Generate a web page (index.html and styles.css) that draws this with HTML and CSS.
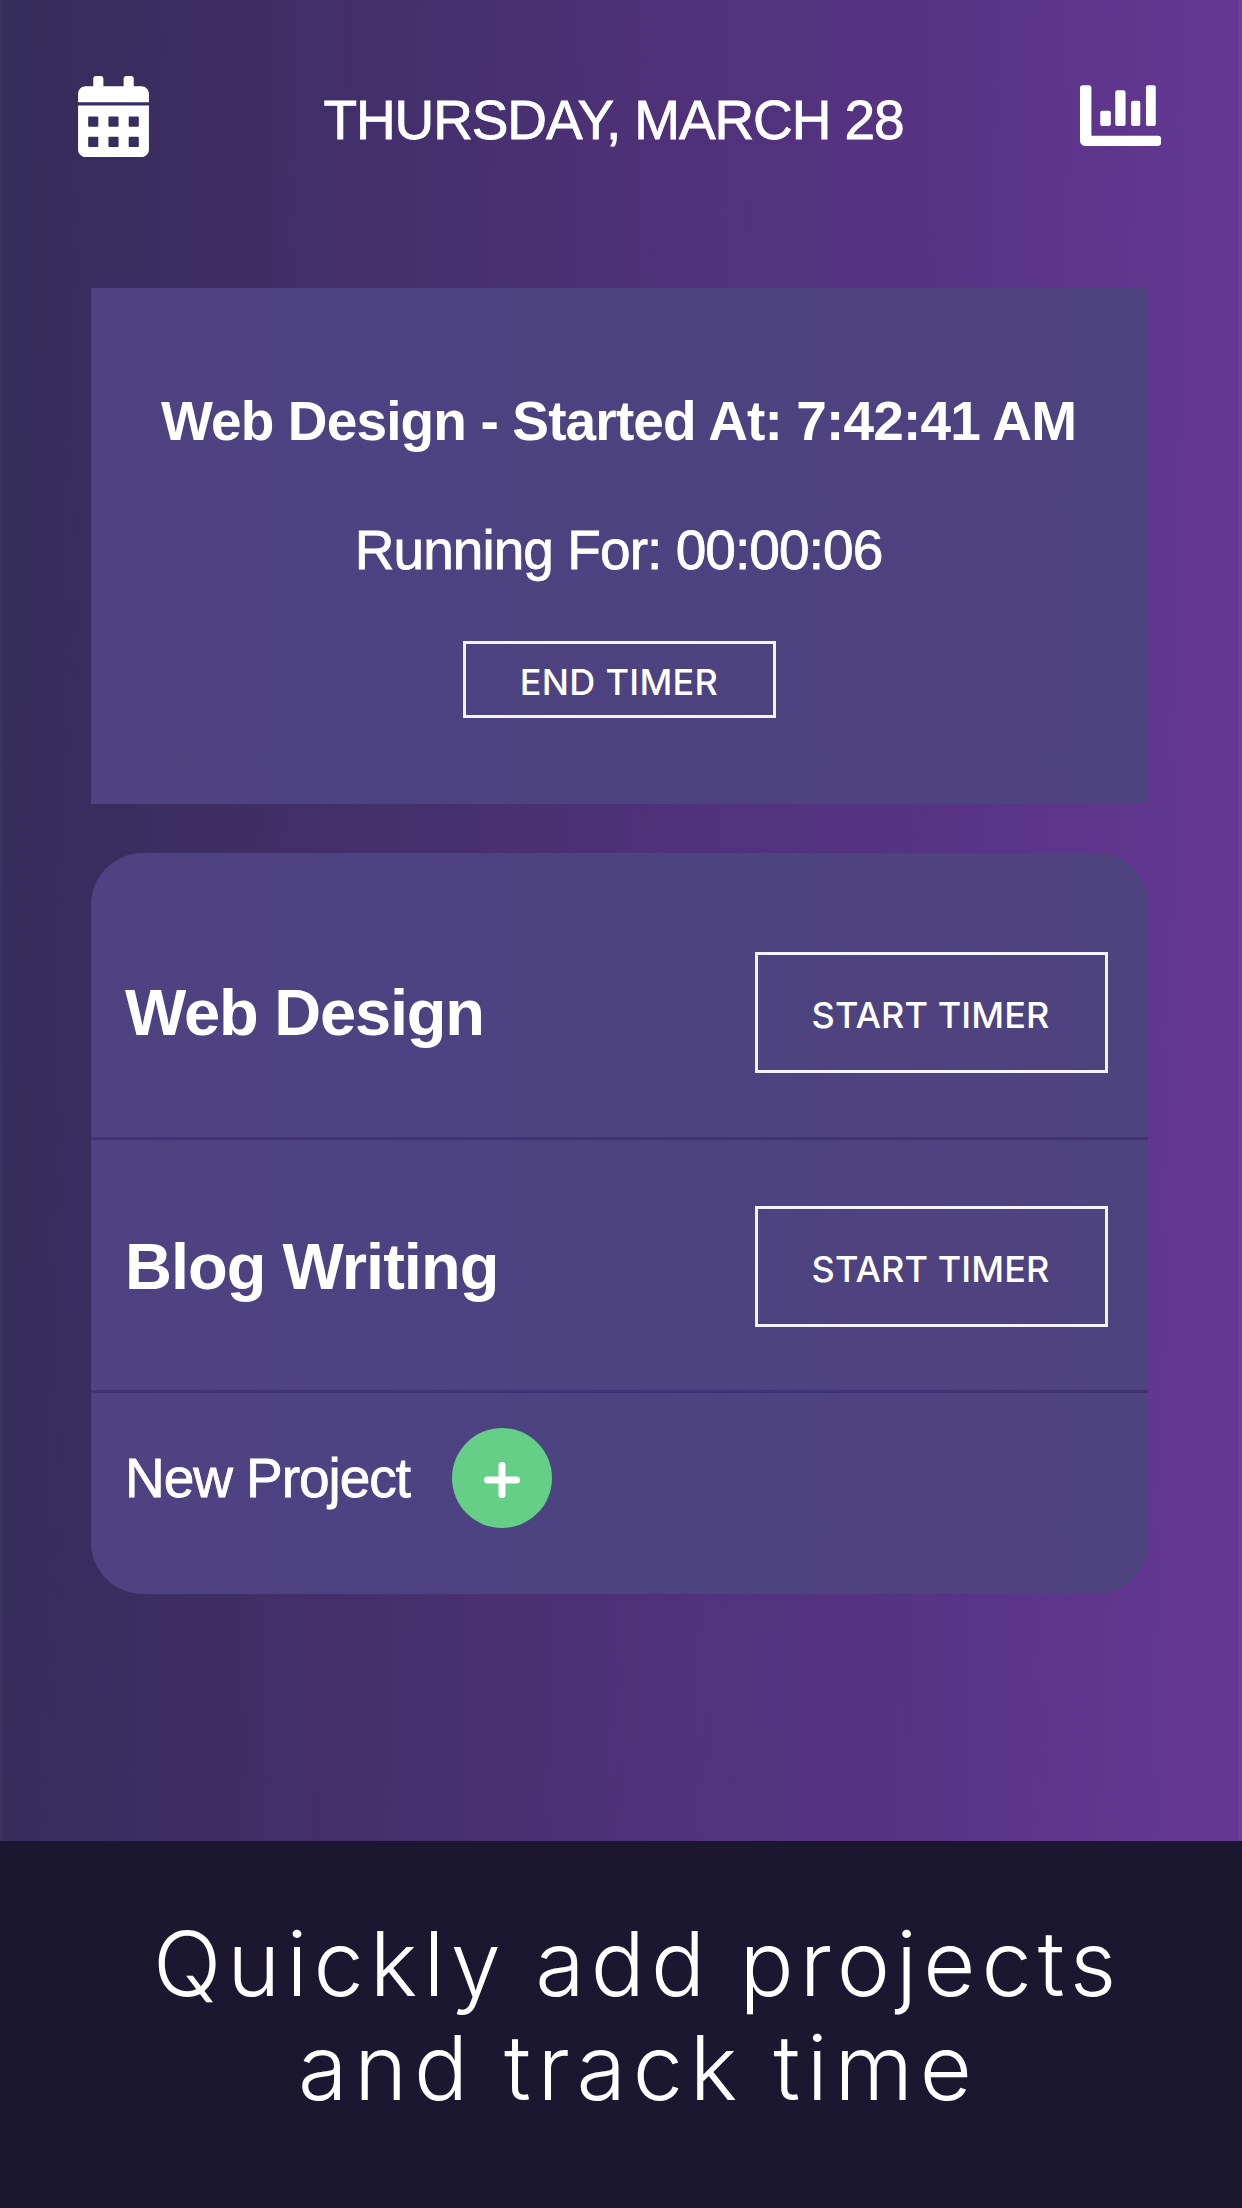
FILE: index.html
```html
<!DOCTYPE html>
<html lang="en">
<head>
<meta charset="utf-8">
<title>Time Tracker</title>
<link rel="stylesheet" href="styles.css">
</head>
<body>
<main class="app">
  <header class="topbar">
    <svg class="icon-calendar" viewBox="0 0 448 512" aria-hidden="true">
      <path fill="currentColor" fill-rule="evenodd" d="M0 464c0 26.500 21.500 48 48 48h352c26.500 0 48-21.500 48-48V187H0v277zM70 256h52q6 0 6 6v52q0 6-6 6H70q-6 0-6-6v-52q0-6 6-6zm128 0h52q6 0 6 6v52q0 6-6 6h-52q-6 0-6-6v-52q0-6 6-6zm128 0h52q6 0 6 6v52q0 6-6 6h-52q-6 0-6-6v-52q0-6 6-6zM70 384h52q6 0 6 6v52q0 6-6 6H70q-6 0-6-6v-52q0-6 6-6zm128 0h52q6 0 6 6v52q0 6-6 6h-52q-6 0-6-6v-52q0-6 6-6zm128 0h52q6 0 6 6v52q0 6-6 6h-52q-6 0-6-6v-52q0-6 6-6zM400 64h-48V16c0-8.800-7.200-16-16-16h-32c-8.800 0-16 7.200-16 16v48H160V16c0-8.800-7.200-16-16-16h-32c-8.800 0-16 7.200-16 16v48H48C21.500 64 0 85.500 0 112v54h448v-54c0-26.500-21.500-48-48-48z"/>
    </svg>
    <h1 class="date">THURSDAY, MARCH 28</h1>
    <svg class="icon-chart" viewBox="0 64 512 384" aria-hidden="true">
      <g fill="currentColor">
        <path d="M496 384H72V80c0-8.840-7.160-16-16-16H16C7.160 64 0 71.160 0 80v336c0 17.670 14.330 32 32 32h464c8.840 0 16-7.160 16-16v-32c0-8.840-7.160-16-16-16z"/>
        <rect x="128" y="226" width="67" height="96" rx="13"/>
        <rect x="223" y="97" width="65" height="225" rx="13"/>
        <rect x="323" y="163" width="58" height="159" rx="13"/>
        <rect x="417" y="65" width="62" height="257" rx="13"/>
      </g>
    </svg>
  </header>

  <section class="running">
    <h2 class="running-title">Web Design - Started At: 7:42:41 AM</h2>
    <p class="running-time">Running For: 00:00:06</p>
    <button class="btn btn-end">END TIMER</button>
  </section>

  <section class="projects">
    <div class="project">
      <h3 class="project-name">Web Design</h3>
      <button class="btn btn-start">START TIMER</button>
    </div>
    <div class="project project-second">
      <h3 class="project-name project-name-wide">Blog Writing</h3>
      <button class="btn btn-start">START TIMER</button>
    </div>
    <div class="new-project">
      <span class="new-label">New Project</span>
      <button class="add" aria-label="Add project">
        <svg class="icon-plus" viewBox="0 0 36 36" aria-hidden="true">
          <path d="M18 3.500v29M3.500 18h29" fill="none" stroke="currentColor" stroke-width="7" stroke-linecap="round"/>
        </svg>
      </button>
    </div>
  </section>
</main>
<footer class="caption">
  <span class="caption-top">Quickly add projects</span>
  <span class="caption-bottom">and track time</span>
</footer>
</body>
</html>
```
FILE: styles.css
```css
* {
  box-sizing: border-box;
}

body {
  margin: 0;
  width: 1242px;
  height: 2208px;
  display: flex;
  flex-direction: column;
  color: #fff;
  background: #1c1730;
  font-family: "Liberation Sans", Arial, sans-serif;
}

h1,
h2,
h3,
p {
  margin: 0;
}

button {
  padding: 0;
  border: 0;
  color: inherit;
  background: none;
}

.app {
  height: 1841px;
  padding: 0 94px 0 91px;
  background: linear-gradient(91deg, #352d5a 0%, #382d5f 9%, #4e3178 52%, #5a3487 80%, #643892 96%, #643892 100%);
  box-shadow: inset 2px 0 rgba(255, 255, 255, 0.03), inset -4px 0 rgba(255, 255, 255, 0.04);
}

.topbar {
  display: flex;
  align-items: flex-start;
  height: 288px;
  margin: 0 -13px;
  padding-top: 76px;
}

.icon-calendar {
  width: 71px;
  height: 81px;
}

.date {
  margin: 13px 0 0 174.500px;
  width: 756px;
  font-size: 55px;
  font-weight: 400;
  line-height: 62px;
  letter-spacing: -1.120px;
  white-space: nowrap;
  -webkit-text-stroke: 0.8px currentColor;
}

.icon-chart {
  width: 81px;
  height: 61px;
  margin-top: 9px;
}

.running {
  height: 516px;
  padding-top: 102px;
  display: flex;
  flex-direction: column;
  align-items: center;
  background: linear-gradient(90deg, #4e4282, #4d437f);
}

.running-title,
.running-time {
  font-size: 55px;
  line-height: 62px;
  letter-spacing: -0.860px;
  white-space: nowrap;
}

.running-title {
  margin-right: 2px;
}

.running-time {
  margin: 67px 2px 0 0;
  letter-spacing: -0.940px;
  -webkit-text-stroke: 0.8px currentColor;
}

.btn {
  display: flex;
  justify-content: center;
  align-items: center;
  padding-top: 4px;
  border: 3px solid #f4f2fa;
  font: 500 36px/44px Inter, "Liberation Sans", sans-serif;
  letter-spacing: 0.100px;
}

.btn-end {
  width: 313px;
  height: 77px;
  margin-top: 60px;
  padding-right: 1px;
  letter-spacing: 0.300px;
}

.btn-start {
  width: 353px;
  height: 121px;
  padding-right: 2px;
}

.projects {
  height: 741px;
  margin-top: 49px;
  padding-top: 34px;
  border-radius: 52px;
  background: linear-gradient(90deg, #4e4282, #4d437f);
}

.project {
  display: flex;
  justify-content: space-between;
  align-items: center;
  height: 253px;
  padding: 1px 40px 0 34px;
  border-bottom: 3px solid #403373;
}

.project-second {
  padding-top: 3px;
}

.project-name {
  font-size: 65px;
  line-height: 73px;
  letter-spacing: -1.200px;
}

.project-name-wide {
  letter-spacing: -0.980px;
}

.new-project {
  display: flex;
  align-items: center;
  padding: 35px 32px 0 34px;
}

.new-label {
  width: 327px;
  font-size: 55px;
  line-height: 62px;
  letter-spacing: -1.050px;
  -webkit-text-stroke: 0.8px currentColor;
}

.add {
  width: 100px;
  height: 100px;
  display: flex;
  justify-content: center;
  align-items: center;
  padding-top: 3px;
  border-radius: 50%;
  background: #65cf87;
}

.icon-plus {
  width: 36px;
  height: 36px;
}

.caption {
  flex: 1;
  display: flex;
  flex-direction: column;
  padding-top: 71px;
  font: 300 90px/104px Inter, Lato, sans-serif;
  white-space: nowrap;
}

.caption-top {
  padding-left: 153px;
  letter-spacing: 6.050px;
  word-spacing: -3px;
}

.caption-bottom {
  padding-left: 298px;
  letter-spacing: 6.750px;
  word-spacing: -3px;
}
```
